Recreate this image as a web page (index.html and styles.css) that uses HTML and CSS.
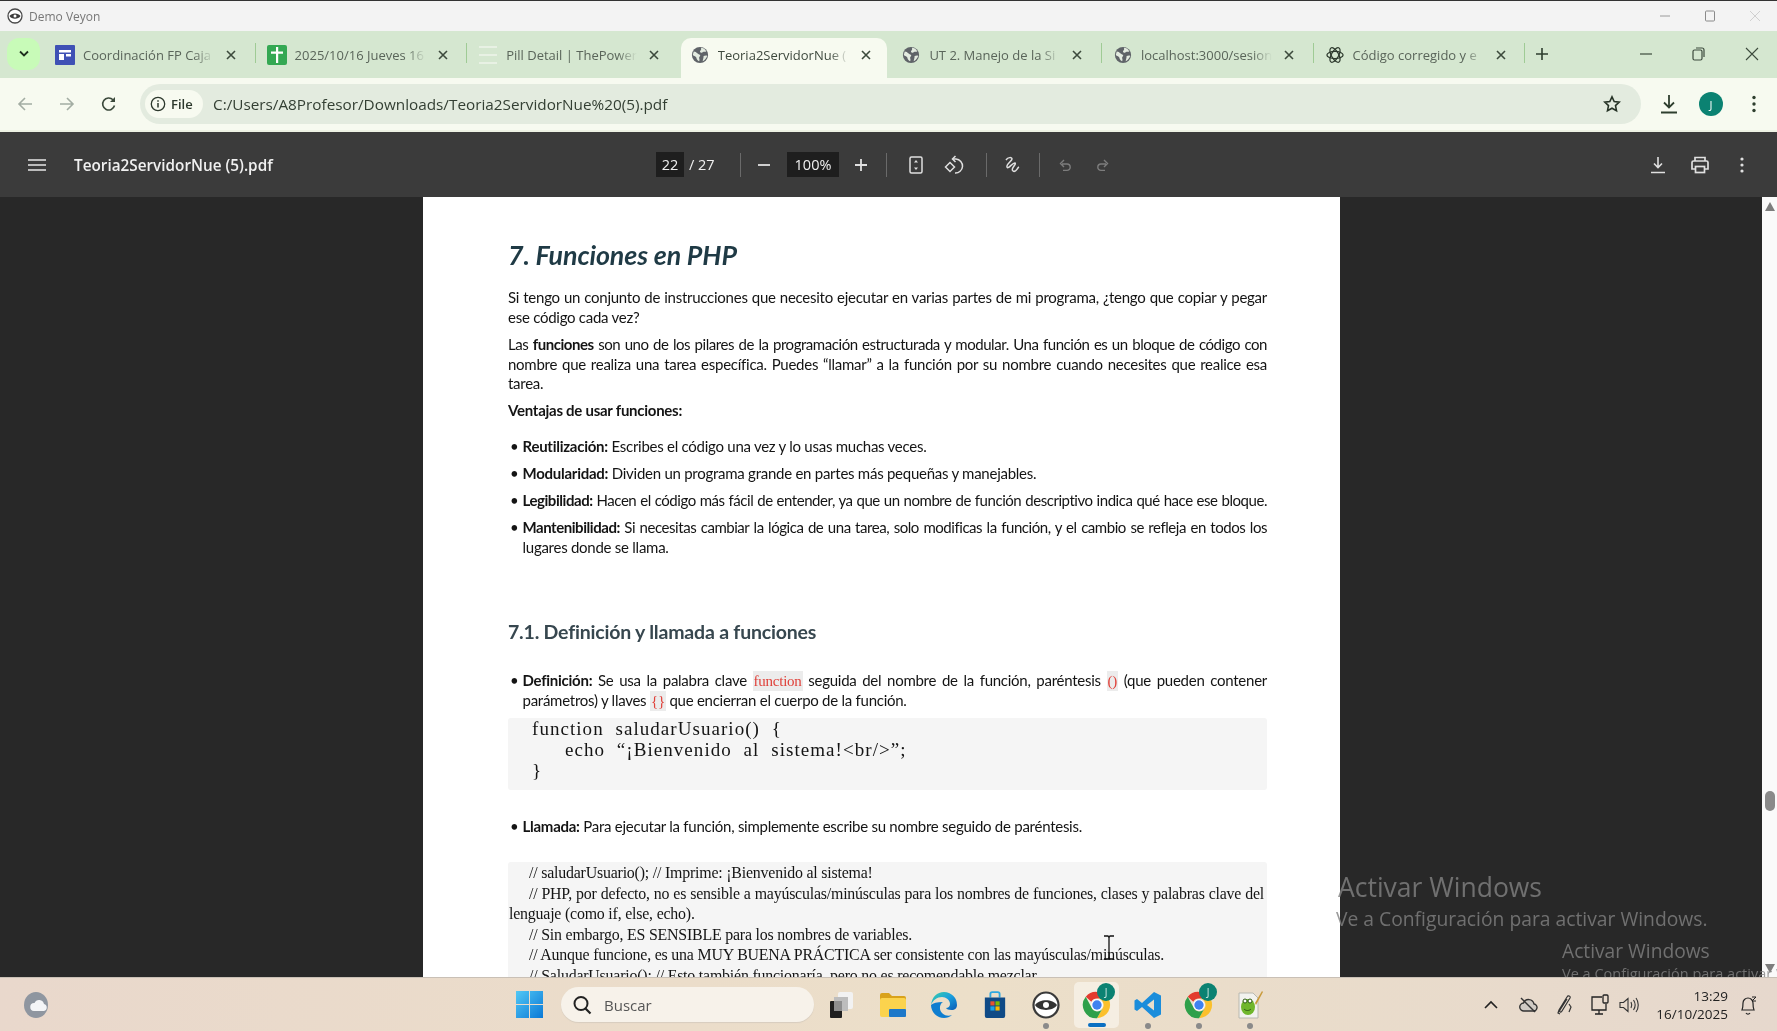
FILE: index.html
```html
<!DOCTYPE html>
<html lang="es">
<head>
  <meta charset="UTF-8" />
  <meta name="viewport" content="width=device-width, initial-scale=1.0"/>
  <title>Teoria2ServidorNue (5).pdf</title>
  <link rel="stylesheet" href="styles.css">
</head>
<body>

<svg class="defs" width="0" height="0">
  <defs>
    <symbol id="globe" viewBox="0 0 20 20">
      <circle cx="10" cy="10" r="9" fill="#5f6368"/>
      <path d="M3 6c2 0 3 1 4 2s2 1 3 2-1 2-1 3 1 2 0 4c-2-1-3-3-3-4S3 11 2 10zM11 2c2 0 5 1 6 4-1 1-3 0-4 1s-3 0-3-1 2-1 1-4zM14 11c1 0 3-1 4 0-1 3-3 5-5 6 0-2 1-3 1-6z" fill="#e3ebe0"/>
    </symbol>
    <symbol id="close" viewBox="0 0 12 12">
      <path d="M2 2l8 8M10 2l-8 8" fill="none" stroke="#3c4a3c" stroke-width="1.6"/>
    </symbol>
    <symbol id="chrome" viewBox="0 0 32 32">
      <path d="M16 2a14 14 0 0 1 12.1 7H16a7 7 0 0 0-6.1 3.5L4 7.3A14 14 0 0 1 16 2z" fill="#e33b2e"/>
      <path d="M28.100 9A14 14 0 0 1 16 30l6-10.500A7 7 0 0 0 22 12.500 7 7 0 0 0 16 9z" fill="#fbc02d"/>
      <path d="M4 7.300l6 11.200A7 7 0 0 0 16 23a7 7 0 0 0 6-3.500L16 30A14 14 0 0 1 4 7.300z" fill="#2fa04a"/>
      <circle cx="16" cy="16" r="6.200" fill="#fff"/>
      <circle cx="16" cy="16" r="5" fill="#3f82f0"/>
    </symbol>
  </defs>
</svg>

<div class="titlebar">
  <svg class="veyon-mini" viewBox="0 0 16 16" width="16" height="16"><circle cx="8" cy="8" r="7" fill="#fff" stroke="#4a4a4a" stroke-width="1.300"/><path d="M2.500 8c2-3.500 9-3.500 11 0-2 3.500-9 3.500-11 0z" fill="#3d3d3d"/><circle cx="8" cy="8" r="1.500" fill="#fff"/></svg>
  <span class="titlebar-name">Demo Veyon</span>
  <div class="titlebar-controls">
    <svg width="12" height="12" viewBox="0 0 12 12"><path d="M1 6h10" stroke="#9a9a9a"/></svg>
    <svg width="12" height="12" viewBox="0 0 12 12"><rect x="1.500" y="1" width="9" height="10" rx="1" fill="none" stroke="#8a8a8a"/></svg>
    <svg width="12" height="12" viewBox="0 0 12 12"><path d="M1 1l10 10M11 1L1 11" stroke="#d0d0d0"/></svg>
  </div>
</div>

<div class="tabstrip">
  <div class="tab-search">
    <svg width="10" height="8" viewBox="0 0 10 8"><path d="M1 1.500l4 4 4-4" fill="none" stroke="#1e2e1e" stroke-width="1.800"/></svg>
  </div>
  <div class="tab">
    <svg class="favicon" viewBox="0 0 20 20"><rect width="20" height="20" rx="1" fill="#3f51b5"/><path d="M4 5h12v2.500H4zM4 9h5v6H4zM11 9h5v2.500h-5z" fill="#fff"/></svg>
    <span class="tab-text">Coordinación FP Caja</span>
    <svg class="tab-close"><use href="#close"/></svg>
  </div>
  <div class="tab">
    <svg class="favicon" viewBox="0 0 20 20"><rect width="20" height="20" rx="2" fill="#34a853"/><path d="M9 2h2.200v16H9zM4 6.500h12v2.200H4z" fill="#fff"/></svg>
    <span class="tab-text">2025/10/16 Jueves 16</span>
    <svg class="tab-close"><use href="#close"/></svg>
  </div>
  <div class="tab tab-before-active">
    <svg class="favicon" viewBox="0 0 20 20"><path d="M1 2h18M1 10h18M1 18h18" stroke="#eef5ea" stroke-width="1.400"/></svg>
    <span class="tab-text">Pill Detail | ThePower</span>
    <svg class="tab-close"><use href="#close"/></svg>
  </div>
  <div class="tab tab-active">
    <svg class="favicon favicon-globe"><use href="#globe"/></svg>
    <span class="tab-text">Teoria2ServidorNue (</span>
    <svg class="tab-close"><use href="#close"/></svg>
  </div>
  <div class="tab">
    <svg class="favicon favicon-globe"><use href="#globe"/></svg>
    <span class="tab-text">UT 2. Manejo de la Si</span>
    <svg class="tab-close"><use href="#close"/></svg>
  </div>
  <div class="tab">
    <svg class="favicon favicon-globe"><use href="#globe"/></svg>
    <span class="tab-text">localhost:3000/sesion</span>
    <svg class="tab-close"><use href="#close"/></svg>
  </div>
  <div class="tab">
    <svg class="favicon favicon-globe" viewBox="0 0 20 20" fill="none" stroke="#2e3a2e" stroke-width="1.400"><ellipse cx="10" cy="10" rx="9" ry="4"/><ellipse cx="10" cy="10" rx="9" ry="4" transform="rotate(60 10 10)"/><ellipse cx="10" cy="10" rx="9" ry="4" transform="rotate(120 10 10)"/></svg>
    <span class="tab-text">Código corregido y e</span>
    <svg class="tab-close"><use href="#close"/></svg>
  </div>
  <svg class="tab-plus" width="14" height="14" viewBox="0 0 14 14"><path d="M7 1v12M1 7h12" stroke="#2e3e2e" stroke-width="1.600"/></svg>
  <div class="window-controls">
    <svg width="12" height="12" viewBox="0 0 12 12"><path d="M0 6h12" stroke="#3c4a3c" stroke-width="1.200"/></svg>
    <svg width="13" height="14" viewBox="0 0 13 14"><rect x="1" y="3" width="9" height="10" rx="1.500" fill="none" stroke="#3c4a3c" stroke-width="1.200"/><path d="M4 1h6a2 2 0 0 1 2 2v7" fill="none" stroke="#3c4a3c" stroke-width="1.200"/></svg>
    <svg width="14" height="14" viewBox="0 0 14 14"><path d="M1 1l12 12M13 1L1 13" stroke="#3c4a3c" stroke-width="1.100"/></svg>
  </div>
</div>

<div class="toolbar">
  <div class="nav-buttons">
    <svg width="16" height="16" viewBox="0 0 16 16"><path d="M15 8H2M8 2L2 8l6 6" fill="none" stroke="#a3ada3" stroke-width="1.600"/></svg>
    <svg width="16" height="16" viewBox="0 0 16 16"><path d="M1 8h13M8 2l6 6-6 6" fill="none" stroke="#a3ada3" stroke-width="1.600"/></svg>
    <svg width="16" height="16" viewBox="0 0 16 16"><path d="M13.500 9.500A6 6 0 1 1 12 3.800" fill="none" stroke="#3c4a3c" stroke-width="1.600"/><path d="M14 1v5H9z" fill="#3c4a3c"/></svg>
  </div>
  <div class="addressbar">
    <div class="site-chip">
      <svg width="16" height="16" viewBox="0 0 16 16"><circle cx="8" cy="8" r="6.700" fill="none" stroke="#2c382c" stroke-width="1.300"/><path d="M8 7v4.500M8 4.200v1.600" stroke="#2c382c" stroke-width="1.500"/></svg>
      <span>File</span>
    </div>
    <span class="url">C:/Users/A8Profesor/Downloads/Teoria2ServidorNue%20(5).pdf</span>
    <svg class="star" width="18" height="18" viewBox="0 0 18 18"><path d="M9 1.800l2.200 4.700 5 .6-3.700 3.500 1 5.100L9 13.200l-4.500 2.500 1-5.100L1.800 7.100l5-.6z" fill="none" stroke="#263326" stroke-width="1.600"/></svg>
  </div>
  <div class="toolbar-right">
    <svg width="20" height="20" viewBox="0 0 20 20"><path d="M10 1v12M5 8.500l5 5 5-5M2 18.500h16" fill="none" stroke="#2e3e2e" stroke-width="1.800"/></svg>
    <div class="avatar">J</div>
    <svg class="toolbar-menu" width="4" height="18" viewBox="0 0 4 18"><circle cx="2" cy="2.500" r="1.700" fill="#2e3e2e"/><circle cx="2" cy="9" r="1.700" fill="#2e3e2e"/><circle cx="2" cy="15.500" r="1.700" fill="#2e3e2e"/></svg>
  </div>
</div>

<div class="pdf-toolbar">
  <div class="pdf-left">
    <svg width="18" height="12" viewBox="0 0 18 12"><path d="M0 1h18M0 6h18M0 11h18" stroke="#e8e8e8" stroke-width="1.600"/></svg>
    <span class="pdf-name">Teoria2ServidorNue (5).pdf</span>
  </div>
  <span class="pdf-input page-input">22</span>
  <span class="pdf-count">/ 27</span>
  <span class="pdf-sep"></span>
  <span class="pdf-btn zoom-out"><svg width="14" height="14" viewBox="0 0 14 14"><path d="M1 7h12" stroke="#e0e0e0" stroke-width="1.800"/></svg></span>
  <span class="pdf-input zoom-input">100%</span>
  <span class="pdf-btn zoom-in"><svg width="14" height="14" viewBox="0 0 14 14"><path d="M1 7h12M7 1v12" stroke="#e0e0e0" stroke-width="1.800"/></svg></span>
  <span class="pdf-sep sep-fit"></span>
  <span class="pdf-btn fit-btn"><svg width="14" height="18" viewBox="0 0 14 18"><rect x="1" y="1" width="12" height="16" rx="1.500" fill="none" stroke="#e0e0e0" stroke-width="1.500"/><path d="M7 4l-2 2.500h4zM7 14l-2-2.500h4z" fill="#e0e0e0"/></svg></span>
  <span class="pdf-btn"><svg width="20" height="20" viewBox="0 0 20 20"><path d="M1.500 12L6 7.500 10.500 12 6 16.500z" fill="none" stroke="#e0e0e0" stroke-width="1.500"/><path d="M11 18a7 7 0 0 0 1-14H9" fill="none" stroke="#e0e0e0" stroke-width="1.500"/><path d="M11.500 1L8.500 4l3 3" fill="none" stroke="#e0e0e0" stroke-width="1.500"/></svg></span>
  <span class="pdf-sep sep-draw"></span>
  <span class="pdf-btn draw-btn"><svg width="18" height="18" viewBox="0 0 18 18"><path d="M3 4c2-3 6-3 6-1S3 8 4 11s6-5 8-4-5 6-2 8 4-3 6-4" fill="none" stroke="#e0e0e0" stroke-width="1.500"/></svg></span>
  <span class="pdf-sep sep-undo"></span>
  <span class="pdf-btn undo-btn"><svg width="16" height="16" viewBox="0 0 16 16"><path d="M5 9h5a3.200 3.200 0 0 1 0 6.400H6M7 5L3.500 8.500 7 12" transform="translate(0 -2)" fill="none" stroke="#7d7d7d" stroke-width="1.400"/></svg></span>
  <span class="pdf-btn"><svg width="16" height="16" viewBox="0 0 16 16"><path d="M11 9H6a3.200 3.200 0 0 0 0 6.400h4M9 5l3.500 3.500L9 12" transform="translate(0 -2)" fill="none" stroke="#7d7d7d" stroke-width="1.400"/></svg></span>
  <div class="pdf-right">
    <svg width="16" height="18" viewBox="0 0 16 18"><path d="M8 1v10M4 7.500L8 11.500l4-4M1 16.500h14" fill="none" stroke="#e0e0e0" stroke-width="1.600"/></svg>
    <svg width="20" height="18" viewBox="0 0 20 18"><path d="M5 5V1.500h10V5M5 13H2V6.500A1.500 1.500 0 0 1 3.500 5h13A1.500 1.500 0 0 1 18 6.500V13h-3" fill="none" stroke="#e0e0e0" stroke-width="1.700"/><rect x="5.500" y="10.500" width="9" height="6" fill="none" stroke="#e0e0e0" stroke-width="1.700"/></svg>
    <svg class="pdf-menu" width="4" height="16" viewBox="0 0 4 16"><circle cx="2" cy="2" r="1.600" fill="#e0e0e0"/><circle cx="2" cy="8" r="1.600" fill="#e0e0e0"/><circle cx="2" cy="14" r="1.600" fill="#e0e0e0"/></svg>
  </div>
</div>

<div class="viewer">
  <div class="canvas">
    <div class="page">
      <h1>7. Funciones en PHP</h1>
      <div class="para para-first">
        <div class="line full">Si tengo un conjunto de instrucciones que necesito ejecutar en varias partes de mi programa, ¿tengo que copiar y pegar</div>
        <div class="line">ese código cada vez?</div>
      </div>
      <div class="para para-next">
        <div class="line full tight">Las <b>funciones</b> son uno de los pilares de la programación estructurada y modular. Una función es un bloque de código con</div>
        <div class="line full">nombre que realiza una tarea específica. Puedes “llamar” a la función por su nombre cuando necesites que realice esa</div>
        <div class="line">tarea.</div>
      </div>
      <div class="line lead"><b>Ventajas de usar funciones:</b></div>
      <ul class="bullets">
        <li><div class="line"><b>Reutilización:</b> Escribes el código una vez y lo usas muchas veces.</div></li>
        <li><div class="line"><b>Modularidad:</b> Dividen un programa grande en partes más pequeñas y manejables.</div></li>
        <li><div class="line full tight"><b>Legibilidad:</b> Hacen el código más fácil de entender, ya que un nombre de función descriptivo indica qué hace ese bloque.</div></li>
        <li><div><div class="line full tight"><b>Mantenibilidad:</b> Si necesitas cambiar la lógica de una tarea, solo modificas la función, y el cambio se refleja en todos los</div>
        <div class="line">lugares donde se llama.</div></div></li>
      </ul>
      <h2>7.1. Definición y llamada a funciones</h2>
      <ul class="bullets bullets-def">
        <li><div><div class="line full"><b>Definición:</b> Se usa la palabra clave <span class="kw">function</span> seguida del nombre de la función, paréntesis <span class="kw">()</span> (que pueden contener</div>
        <div class="line">parámetros) y llaves <span class="kw">{}</span> que encierran el cuerpo de la función.</div></div></li>
      </ul>
      <div class="code code-short">
        <div class="code-line">function saludarUsuario() {</div>
        <div class="code-line code-indent">echo “¡Bienvenido al sistema!&lt;br/&gt;”;</div>
        <div class="code-line">}</div>
      </div>
      <ul class="bullets bullets-call">
        <li><div class="line"><b>Llamada:</b> Para ejecutar la función, simplemente escribe su nombre seguido de paréntesis.</div></li>
      </ul>
      <div class="code code-long">
        <div class="note-line">// saludarUsuario(); // Imprime: ¡Bienvenido al sistema!</div>
        <div class="note-line note-wide">// PHP, por defecto, no es sensible a mayúsculas/minúsculas para los nombres de funciones, clases y palabras clave del</div>
        <div class="note-line note-flush">lenguaje (como if, else, echo).</div>
        <div class="note-line">// Sin embargo, ES SENSIBLE para los nombres de variables.</div>
        <div class="note-line">// Aunque funcione, es una MUY BUENA PRÁCTICA ser consistente con las mayúsculas/minúsculas.</div>
        <div class="note-line">// SaludarUsuario(); // Esto también funcionaría, pero no es recomendable mezclar.</div>
      </div>
    </div>
  </div>
  <div class="scrollbar">
    <span class="arrow-up"></span>
    <span class="thumb"></span>
    <span class="arrow-down"></span>
  </div>

  <div class="watermark watermark-big">
    <div class="wm-title">Activar Windows</div>
    <div class="wm-sub">Ve a Configuración para activar Windows.</div>
  </div>
  <div class="watermark watermark-small">
    <div class="wm-title">Activar Windows</div>
    <div class="wm-sub">Ve a Configuración para activar Windows.</div>
  </div>
  <svg class="ibeam" width="12" height="25" viewBox="0 0 12 25"><path d="M1 1h4l1 1.500L7 1h4M6 2.500v20M1 24h4l1-1.500L7 24h4" fill="none" stroke="#111" stroke-width="1.300"/></svg>
</div>

<div class="taskbar">
  <svg class="weather" width="26" height="28" viewBox="0 0 26 28"><ellipse cx="12" cy="14" rx="12" ry="13" fill="#8f96a0"/><path d="M10 20a4 4 0 0 1 .5-8 5 5 0 0 1 9.500 1 3.600 3.600 0 0 1 0 7z" fill="#f4f5f7"/></svg>
  <div class="task-center">
    <svg class="winlogo" width="27" height="27" viewBox="0 0 27 27"><defs><linearGradient id="win" x1="0" y1="0" x2="1" y2="1"><stop offset="0" stop-color="#52c8f5"/><stop offset="1" stop-color="#0a78d6"/></linearGradient></defs><path d="M0 0h13v13H0zM14 0h13v13H14zM0 14h13v13H0zM14 14h13v13H14z" fill="url(#win)"/></svg>
    <div class="search">
      <svg width="20" height="20" viewBox="0 0 20 20"><circle cx="9" cy="8.500" r="6.500" fill="none" stroke="#222" stroke-width="2"/><path d="M13.500 13.500l5 5" stroke="#222" stroke-width="2.200"/></svg>
      <span>Buscar</span>
    </div>
    <div class="task-app"><svg width="26" height="28" viewBox="0 0 26 28"><rect x="9" y="1" width="15" height="17" rx="2" fill="#f2f2f2"/><rect x="5" y="6" width="14" height="14" fill="#bdbdbd"/><rect x="1" y="10" width="12" height="17" rx="1" fill="#1f1f1f"/><rect x="5" y="10" width="8" height="10" fill="#8e8e8e"/></svg></div>
    <div class="task-app"><svg width="28" height="26" viewBox="0 0 28 26"><path d="M1 3a2 2 0 0 1 2-2h7l3 3h12a2 2 0 0 1 2 2v4H1z" fill="#d9a21b"/><rect x="1" y="6" width="26" height="19" rx="2" fill="#fbd34d"/><rect x="10" y="17" width="17" height="8" rx="1" fill="#1d78c9"/></svg></div>
    <div class="task-app"><svg width="28" height="28" viewBox="0 0 28 28"><defs><linearGradient id="edge" x1="0" y1="0" x2="1" y2="1"><stop offset="0" stop-color="#3cd1a4"/><stop offset=".5" stop-color="#1a9fde"/><stop offset="1" stop-color="#0c5bb5"/></linearGradient></defs><path d="M14 1a13 13 0 0 1 13 13c0 3-2 5-5.500 5-3 0-5-1-5.500-2 2 0 4-1.500 4-4 0-4-4-7-8-7-5 0-9 3-11 8C2 6 7 1 14 1z" fill="url(#edge)"/><path d="M1 14c0 7 6 13 13 13 3 0 6-1 8-3-6 2-11-1-12-6-.5-3 1-6 3-7-6 0-10 1-12 3z" fill="#0f7ed0"/></svg></div>
    <div class="task-app"><svg width="24" height="30" viewBox="0 0 26 30"><path d="M8 7V3a2 2 0 0 1 2-2h6a2 2 0 0 1 2 2v4" fill="none" stroke="#2fa8e0" stroke-width="2"/><path d="M2 7h22v20a2 2 0 0 1-2 2H4a2 2 0 0 1-2-2z" fill="#0f4a86"/><rect x="8" y="11" width="4.500" height="4.500" fill="#e8512f"/><rect x="13.500" y="11" width="4.500" height="4.500" fill="#7fba00"/><rect x="8" y="16.500" width="4.500" height="4.500" fill="#1aa3e8"/><rect x="13.500" y="16.500" width="4.500" height="4.500" fill="#f9b900"/></svg></div>
    <div class="task-app has-dot"><svg width="28" height="28" viewBox="0 0 28 28"><circle cx="14" cy="14" r="12.500" fill="#fff" stroke="#3a3a3a" stroke-width="2.200"/><path d="M3 14c4-6.500 18-6.500 22 0-4 6.500-18 6.500-22 0z" fill="#333"/><circle cx="14" cy="14" r="3" fill="#fff"/></svg></div>
    <div class="task-app task-active has-bar"><svg class="chrome-logo"><use href="#chrome"/></svg><span class="chrome-badge">J</span></div>
    <div class="task-app has-dot"><svg width="28" height="28" viewBox="0 0 28 28"><path d="M20 1l7 3.500v19L20 27 8 16l-5 4-2.500-1.500v-9L3 8l5 4zm0 7.500L13 14l7 5.500z" fill="#1b8ddb"/></svg></div>
    <div class="task-app has-dot"><svg class="chrome-logo"><use href="#chrome"/></svg><span class="chrome-badge">J</span></div>
    <div class="task-app has-dot"><svg width="28" height="30" viewBox="0 0 28 30"><path d="M3 3h14l5 5v20H3z" fill="#f2f2ee" stroke="#b8b8b0"/><ellipse cx="12" cy="17" rx="7" ry="8" fill="#6fb62c"/><circle cx="9" cy="11" r="2" fill="#fff" stroke="#2c5a12"/><circle cx="14" cy="11" r="2" fill="#fff" stroke="#2c5a12"/><path d="M8 19c2 2 5 2 7 0" fill="none" stroke="#2c5a12"/><path d="M19 13L26 1l1 1-7 13z" fill="#c99a3a"/></svg></div>
  </div>
  <div class="tray">
    <svg class="tray-chevron" width="14" height="9" viewBox="0 0 14 9"><path d="M1 8l6-6 6 6" fill="none" stroke="#222" stroke-width="1.600"/></svg>
    <svg width="20" height="20" viewBox="0 0 20 20"><path d="M6 16a4 4 0 0 1-.5-8A5.500 5.500 0 0 1 16 9a3.500 3.500 0 0 1-1 7z" fill="#cfcac4" stroke="#333" stroke-width="1.400"/><path d="M3 3l14 14" stroke="#333" stroke-width="1.400"/></svg>
    <svg width="20" height="22" viewBox="0 0 20 22"><path d="M6 20L4 19l1-3L13 3c1-2 4-1 3 1L8 17c-1 2-3 1-2-1l7-11" fill="none" stroke="#333" stroke-width="1.200"/><path d="M15 10l2 3-2 5" fill="none" stroke="#333" stroke-width="1.200"/></svg>
    <svg class="tray-network" width="20" height="22" viewBox="0 0 20 22"><path d="M12 3H2v13h14v-6M5 20h8M9 16v4" fill="none" stroke="#222" stroke-width="1.300"/><rect x="13" y="1" width="5" height="8" rx="1" fill="none" stroke="#222" stroke-width="1.300"/></svg>
    <svg class="tray-volume" width="20" height="18" viewBox="0 0 20 18"><path d="M1 6.500h3.500L9 2.500v13l-4.500-4H1z" fill="none" stroke="#333" stroke-width="1.100"/><path d="M12 6c1 2 1 4 0 6M14.500 4c2 3 2 7 0 10M17 2c3 4 3 10 0 14" fill="none" stroke="#333" stroke-width="1.100"/></svg>
    <div class="clock"><div>13:29</div><div>16/10/2025</div></div>
    <svg width="20" height="22" viewBox="0 0 20 22"><path d="M4 16c1-2 1-4 1-7a5 5 0 0 1 10 0c0 3 0 5 1 7zM8 19c1 1.500 3 1.500 4 0" fill="none" stroke="#222" stroke-width="1.200"/><path d="M14 3h4l-4 4h4" fill="none" stroke="#222"/></svg>
  </div>
</div>

</body>
</html>
```

FILE: styles.css
```css
* {
  box-sizing: border-box;
}

html, body {
  margin: 0;
  padding: 0;
  height: 100%;
  overflow: hidden;
}

body {
  width: 1777px;
  height: 1031px;
  display: flex;
  flex-direction: column;
  font-family: "Open Sans", "Noto Sans", sans-serif;
  filter: blur(0.35px);
}

svg {
  display: block;
  flex: none;
}

.defs {
  position: absolute;
}

/* window title bar */
.titlebar {
  height: 31px;
  flex: none;
  display: flex;
  align-items: center;
  padding-left: 7px;
  background: #f3f3f3;
  border-top: 1px solid #333;
}

.titlebar-name {
  margin-left: 6px;
  font-size: 12px;
  color: #777;
}

.titlebar-controls {
  margin-left: auto;
  display: flex;
  gap: 33px;
  padding-right: 16px;
}

/* tabs */
.tabstrip {
  height: 47px;
  flex: none;
  display: flex;
  align-items: flex-end;
  background: #d5e7d0;
}

.tab-search {
  width: 33px;
  height: 32px;
  margin: 0 4px 8px 7px;
  border-radius: 12px;
  background: #c8fbb8;
  display: flex;
  align-items: center;
  justify-content: center;
}

.tab {
  width: 211.600px;
  height: 40px;
  padding: 0 12px 6px 11px;
  display: flex;
  align-items: center;
  position: relative;
  border-radius: 10px 10px 0 0;
}

.tab::after {
  content: "";
  position: absolute;
  right: 0;
  top: 5px;
  height: 20px;
  width: 1px;
  background: #9fcb95;
}

.tab-active {
  width: 206.600px;
  margin: 0 3px 0 2px;
  padding-left: 9px;
  padding-right: 9px;
  background: #f7faf0;
}

.tab-active::after, .tab-before-active::after {
  display: none;
}

.favicon {
  width: 20px;
  height: 20px;
}

.favicon-globe {
  width: 18px;
  height: 18px;
  margin: 0 1px;
}

.tab-text {
  width: 131px;
  margin-left: 8px;
  font-size: 13px;
  color: #5a655a;
  white-space: nowrap;
  overflow: hidden;
  -webkit-mask-image: linear-gradient(to right, #000 85%, transparent);
  mask-image: linear-gradient(to right, #000 85%, transparent);
}

.tab-active .tab-text {
  color: #3d483d;
}

.tab-close {
  width: 12px;
  height: 12px;
  margin-left: 11px;
}

.tab-plus {
  margin: 0 0 17px 10px;
}

.window-controls {
  margin-left: auto;
  display: flex;
  align-items: center;
  gap: 40px;
  padding: 0 18px 17px 0;
}

/* address bar row */
.toolbar {
  height: 54px;
  flex: none;
  display: flex;
  align-items: center;
  background: #f7faf0;
  border-bottom: 2px solid #eef2e4;
}

.nav-buttons {
  width: 140px;
  display: flex;
  gap: 26px;
  padding-left: 17px;
}

.addressbar {
  width: 1501px;
  height: 40px;
  display: flex;
  align-items: center;
  padding: 0 20px 0 5px;
  border-radius: 20px;
  background: #e3ebdf;
}

.site-chip {
  width: 58px;
  height: 28px;
  padding-left: 5px;
  display: flex;
  align-items: center;
  gap: 5px;
  border-radius: 14px;
  background: #f7faf0;
  font-size: 13px;
  font-weight: 600;
  color: #2c382c;
}

.url {
  margin-left: 10px;
  font-size: 15.300px;
  color: #333f33;
  white-space: nowrap;
}

.star {
  margin-left: auto;
}

.toolbar-right {
  flex: 1;
  display: flex;
  align-items: center;
  padding-left: 18px;
  gap: 20px;
}

.toolbar-menu {
  margin-left: 9px;
}

.avatar {
  width: 24px;
  height: 24px;
  border-radius: 50%;
  background: #0b8272;
  color: #fff;
  font-size: 11px;
  display: flex;
  align-items: center;
  justify-content: center;
}

/* pdf viewer toolbar */
.pdf-toolbar {
  height: 65px;
  flex: none;
  display: flex;
  align-items: center;
  background: #3b3b3b;
  color: #f0f0f0;
}

.pdf-left {
  width: 656px;
  padding-left: 28px;
  display: flex;
  align-items: center;
  gap: 28px;
}

.pdf-name {
  font-size: 15.300px;
  font-weight: 600;
}

.pdf-input {
  height: 25px;
  display: flex;
  align-items: center;
  justify-content: center;
  background: #1e1e1e;
  font-size: 14.500px;
}

.page-input {
  width: 28px;
}

.zoom-input {
  width: 52px;
}

.pdf-count {
  width: 56px;
  padding-left: 5px;
  font-size: 14.500px;
}

.pdf-sep {
  width: 1px;
  height: 24px;
  background: #6a6a6a;
}

.pdf-btn {
  width: 38px;
  display: flex;
  justify-content: center;
}

.zoom-out {
  width: 46px;
}

.zoom-in {
  width: 43px;
}

.sep-fit {
  margin-left: 4px;
}

.fit-btn {
  margin-left: 10px;
}

.sep-draw {
  margin-left: 13px;
}

.draw-btn {
  margin-left: 6px;
}

.sep-undo {
  margin-left: 8px;
}

.undo-btn {
  margin-left: 6px;
}

.pdf-right {
  margin-left: auto;
  display: flex;
  align-items: center;
  gap: 24px;
  padding-right: 33px;
}

.pdf-menu {
  margin-left: 6px;
}

/* document */
.viewer {
  flex: 1;
  min-height: 0;
  display: flex;
  position: relative;
  background: #282828;
  overflow: hidden;
}

.canvas {
  flex: 1;
  display: flex;
  justify-content: center;
  padding-left: 1px;
}

.page {
  width: 917px;
  padding: 0 73px 0 85px;
  background: #fff;
  font-family: Lato, "Open Sans", sans-serif;
  font-size: 15px;
  color: #141414;
  letter-spacing: -0.260px;
}

.page h1 {
  margin: 43px 0 0;
  font-size: 26.800px;
  line-height: 30px;
  font-weight: 700;
  font-style: italic;
  color: #1f3a45;
  letter-spacing: -0.100px;
}

.page h2 {
  margin: 61.500px 0 0;
  font-size: 19.500px;
  line-height: 26px;
  font-weight: 700;
  color: #37474f;
  letter-spacing: -0.200px;
}

.line {
  line-height: 19.500px;
  white-space: nowrap;
}

.full {
  white-space: normal;
  text-align: justify;
  text-align-last: justify;
}

.tight {
  letter-spacing: -0.450px;
}

.para-first {
  margin-top: 18px;
}

.para-next {
  margin-top: 8px;
}

.lead {
  margin-top: 7px;
}

.bullets {
  list-style: none;
  margin: 17px 0 0;
  padding: 0;
  display: flex;
  flex-direction: column;
  gap: 7.500px;
}

.bullets li {
  display: flex;
}

.bullets li::before {
  content: "•";
  flex: none;
  width: 14px;
  margin-right: -1.500px;
  line-height: 19.500px;
  padding-left: 2px;
}

.bullets li > div {
  flex: 1;
  min-width: 0;
}

.bullets-def {
  margin-top: 26px;
}

.bullets-call {
  margin-top: 27px;
}

.kw {
  background: #ececec;
  color: #e0413a;
  font-family: "Liberation Serif", serif;
  padding: 2px 1px;
}

.code {
  background: #f5f5f5;
  font-family: "Liberation Serif", serif;
  letter-spacing: 0;
  border-radius: 3px;
}

.code-short {
  height: 72px;
  margin-top: 6px;
  padding-left: 24px;
  font-size: 19px;
  letter-spacing: 1.050px;
  word-spacing: 6px;
}

.code-line {
  line-height: 21px;
}

.code-indent {
  padding-left: 33px;
}

.code-long {
  margin-top: 26px;
  height: 130px;
  padding-top: 1px;
  font-size: 15.900px;
}

.note-line {
  line-height: 20.600px;
  padding-left: 21px;
  white-space: nowrap;
  letter-spacing: -0.200px;
}

.note-wide {
  white-space: normal;
  text-align: justify;
  text-align-last: justify;
  padding-right: 3px;
}

.note-flush {
  padding-left: 1px;
}

/* scrollbar */
.scrollbar {
  width: 15px;
  flex: none;
  position: relative;
  background: #fafafa;
}

.thumb {
  position: absolute;
  top: 594px;
  left: 3px;
  width: 10px;
  height: 20px;
  border-radius: 5px;
  background: #8a8a8a;
}

.arrow-up, .arrow-down {
  position: absolute;
  left: 3px;
  width: 0;
  height: 0;
  border-left: 5px solid transparent;
  border-right: 5px solid transparent;
}

.arrow-up {
  top: 5px;
  border-bottom: 9px solid #7d7d7d;
}

.arrow-down {
  bottom: 4px;
  border-top: 9px solid #7d7d7d;
}

/* overlays on top of the viewer */
.watermark {
  position: absolute;
  font-family: "Open Sans", sans-serif;
  color: rgba(130, 130, 130, 0.8);
  white-space: nowrap;
}

.watermark-big {
  top: 672px;
  left: 1336px;
}

.watermark-big .wm-title {
  font-size: 26.500px;
  line-height: 36px;
  padding-left: 2px;
}

.watermark-big .wm-sub {
  font-size: 19.300px;
  line-height: 27px;
}

.watermark-small {
  top: 740px;
  left: 1562px;
}

.watermark-small .wm-title {
  font-size: 19.200px;
  line-height: 27px;
}

.watermark-small .wm-sub {
  font-size: 14.500px;
  line-height: 20px;
}

.ibeam {
  position: absolute;
  left: 1103px;
  top: 738px;
}

/* windows taskbar */
.taskbar {
  height: 54px;
  flex: none;
  display: flex;
  align-items: center;
  position: relative;
  padding-left: 24px;
  background: linear-gradient(to right, #e9d8cc, #ecdfc9 55%, #e6d8cd);
  border-top: 1px solid #c9c0b6;
}

.task-center {
  display: flex;
  align-items: center;
  margin-left: 466px;
}

.search {
  width: 253px;
  height: 35px;
  margin: 0 2px 0 18px;
  padding-left: 11px;
  display: flex;
  align-items: center;
  gap: 12px;
  border-radius: 18px;
  background: #f7f2ea;
  box-shadow: 0 1px 1px #d8cdbf;
  font-size: 15px;
  color: #555;
}

.task-app {
  width: 51px;
  height: 50px;
  position: relative;
  display: flex;
  align-items: center;
  justify-content: center;
  border-radius: 5px;
}

.task-active {
  width: 45px;
  height: 46px;
  margin: 0 3px;
  background: #f5eee2;
}

.has-dot::after, .has-bar::after {
  content: "";
  position: absolute;
  bottom: 1px;
  left: 50%;
  background: #8a8a8a;
}

.has-dot::after {
  width: 6px;
  height: 6px;
  margin-left: -3px;
  border-radius: 50%;
}

.has-bar::after {
  width: 18px;
  height: 4px;
  margin-left: -9px;
  border-radius: 2px;
  background: #0a6fc2;
}

.chrome-logo {
  width: 30px;
  height: 30px;
}

.chrome-badge {
  position: absolute;
  top: 3px;
  right: 7px;
  width: 18px;
  height: 18px;
  border-radius: 50%;
  background: #0b8272;
  color: #cfe9e3;
  font-size: 10px;
  display: flex;
  align-items: center;
  justify-content: center;
}

.task-active .chrome-badge {
  top: 1px;
  right: 4px;
}

.tray {
  margin-left: auto;
  display: flex;
  align-items: center;
  gap: 16px;
  padding-right: 19px;
}

.tray-chevron {
  margin-right: 4px;
}

.tray-network {
  margin-right: -7px;
}

.tray-volume {
  margin-right: -1px;
}

.clock {
  width: 74px;
  margin-right: -6px;
  text-align: right;
  font-size: 13.500px;
  line-height: 18px;
  white-space: nowrap;
  color: #222;
}
```
